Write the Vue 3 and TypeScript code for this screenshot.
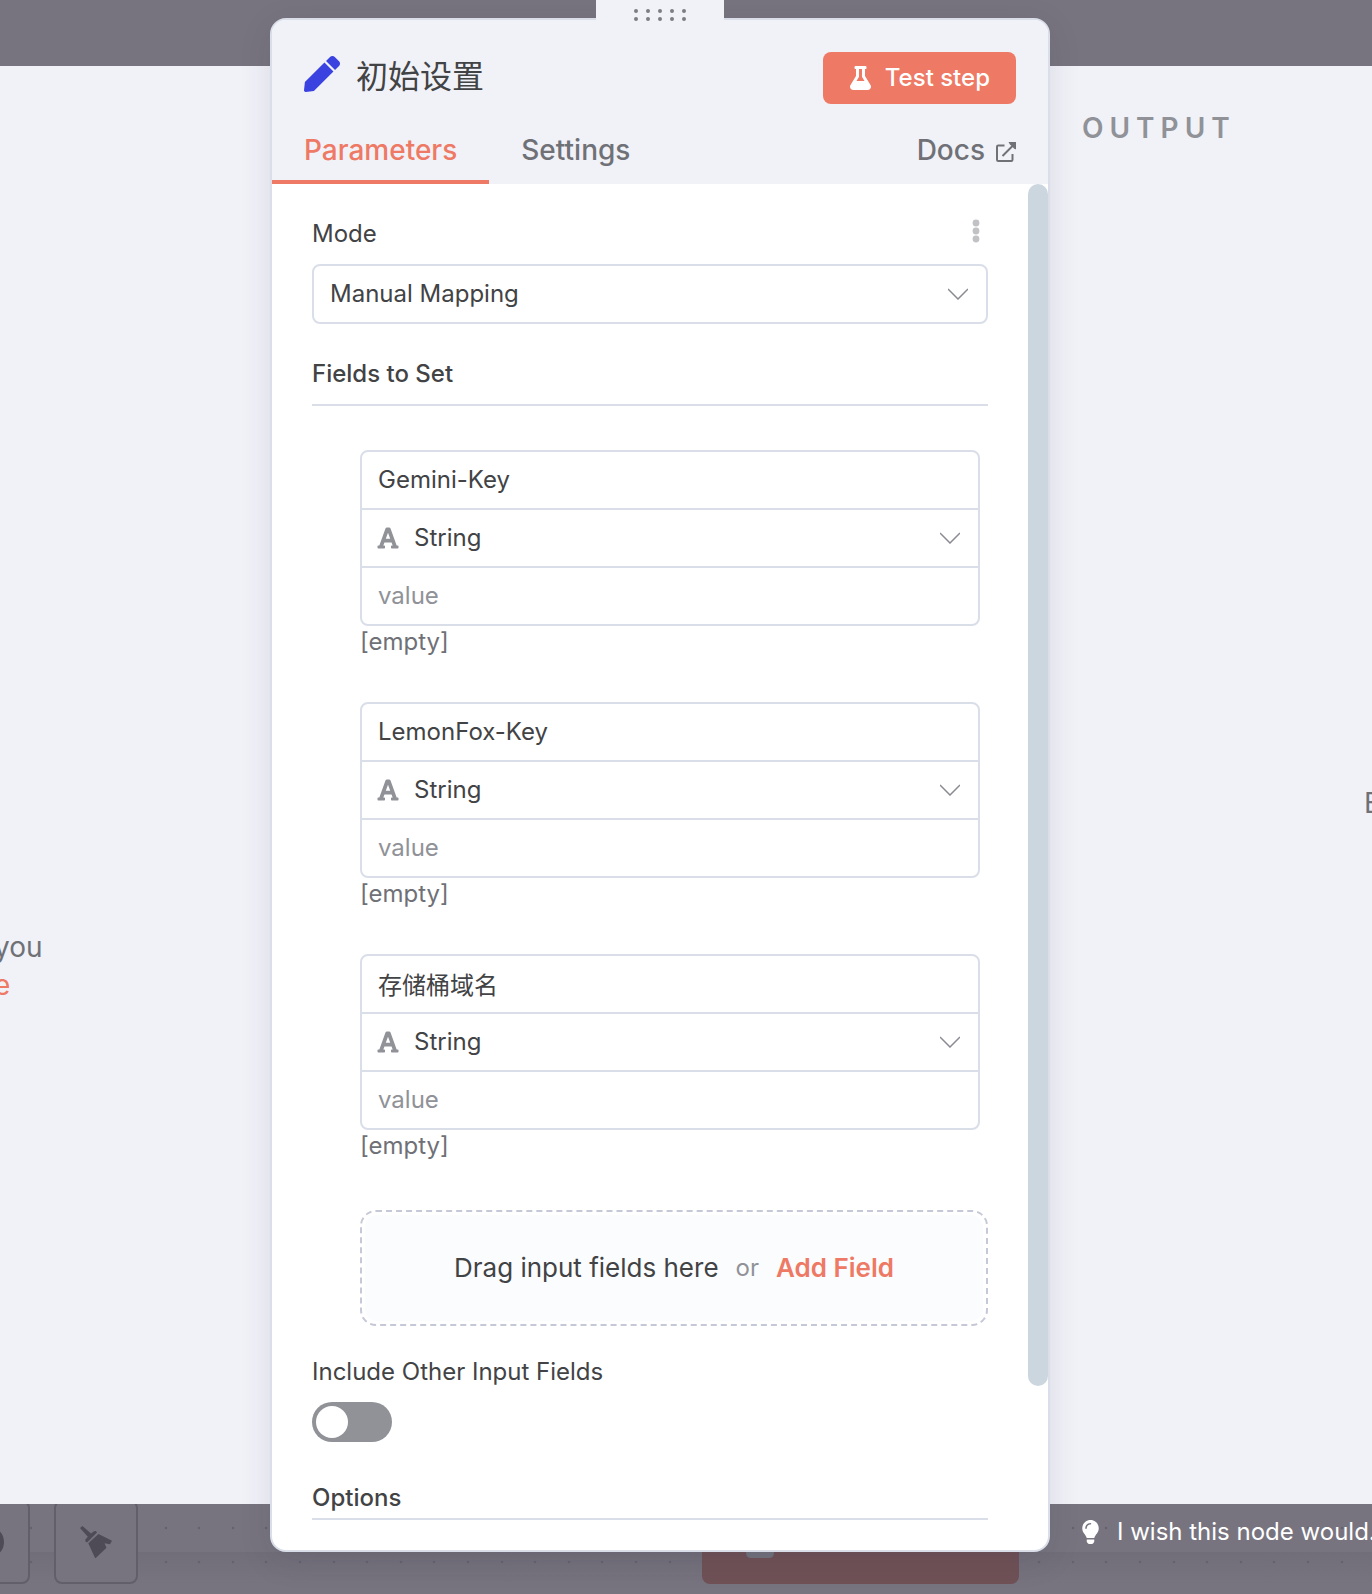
<script setup lang="ts">
import { ref } from 'vue'

interface Assignment {
  id: string
  name: string
  type: string
  value: string
}

const mode = ref('manual')
const includeOther = ref(false)
const assignments = ref<Assignment[]>([
  { id: 'gemini', name: 'Gemini-Key', type: 'string', value: '' },
  { id: 'lemonfox', name: 'LemonFox-Key', type: 'string', value: '' },
  { id: 'bucket', name: '存储桶域名', type: 'string', value: '' },
])

const dotColumns = [31, 65, 98, 132, 166]
</script>

<template>
  <div class="page">
    <div class="canvas-top"></div>

    <main class="stage">
      <section class="input-pane" aria-label="Input">
        <p class="hint">you<br /><a href="#">e</a></p>
      </section>

      <section class="panel">
        <div class="drag-handle" aria-hidden="true">
          <svg width="52" height="12" viewBox="0 0 52 12">
            <g v-for="n in 5" :key="n" fill="#7c7d83">
              <circle :cx="n * 12 - 10" cy="2" r="2" />
              <circle :cx="n * 12 - 10" cy="10" r="2" />
            </g>
          </svg>
        </div>

        <header class="panel-head">
          <div class="title-row">
            <div class="title">
              <svg class="pen" width="36" height="36" viewBox="0 0 512 512" aria-hidden="true">
                <path fill="#3a42e0" d="M290.74 93.24l128.02 128.02-277.99 277.99-114.14 12.6C11.35 513.54-1.56 500.62.14 485.34l12.7-114.22 277.9-277.88zm207.2-19.06l-60.11-60.11c-18.75-18.75-49.16-18.75-67.91 0l-56.55 56.55 128.02 128.02 56.55-56.55c18.75-18.76 18.75-49.16 0-67.91z" />
              </svg>
              <h1>初始设置</h1>
            </div>
            <button class="test-btn" type="button">
              <svg width="21" height="24" viewBox="0 0 448 512" aria-hidden="true">
                <path fill="#fff" d="M437.2 403.5L320 215V64h8c13.3 0 24-10.7 24-24V24c0-13.3-10.7-24-24-24H120c-13.3 0-24 10.7-24 24v16c0 13.3 10.7 24 24 24h8v151L10.8 403.5C-18.5 450.6 15.3 512 70.9 512h306.2c55.7 0 89.4-61.5 60.1-108.5zM137.9 320l48.2-77.6c3.7-5.2 5.8-11.6 5.8-18.4V64h64v160c0 6.9 2.2 13.2 5.8 18.4l48.2 77.6h-172z" />
              </svg>
              <span>Test step</span>
            </button>
          </div>
          <nav class="tabs">
            <a class="tab active" href="#parameters">Parameters</a>
            <a class="tab" href="#settings">Settings</a>
            <a class="tab docs" href="#docs">
              Docs
              <svg width="20" height="24" viewBox="0 0 20 24" aria-hidden="true">
                <path d="M8.500 7.500H2.200Q1 7.500 1 8.700V21.800Q1 23 2.200 23H15.300Q16.500 23 16.500 21.800V16M6.500 18L17 7.500" fill="none" stroke="#6f7177" stroke-width="2" />
                <path d="M12.500 4H20V11.500L17.800 10.200 13.800 6.200Z" fill="#6f7177" />
              </svg>
            </a>
          </nav>
        </header>

        <div class="panel-body">
          <form class="params" @submit.prevent>
            <div class="label-row">
              <label for="mode">Mode</label>
              <button class="more" type="button" aria-label="Parameter options">
                <svg width="8" height="24" viewBox="0 0 8 24">
                  <g fill="#c1c2c6">
                    <circle cx="4" cy="4" r="3.400" />
                    <circle cx="4" cy="12" r="3.400" />
                    <circle cx="4" cy="20" r="3.400" />
                  </g>
                </svg>
              </button>
            </div>
            <div class="select-box">
              <select id="mode" v-model="mode">
                <option value="manual">Manual Mapping</option>
                <option value="json">JSON</option>
              </select>
              <svg class="chevron" width="20" height="12" viewBox="0 0 20 12" aria-hidden="true">
                <path d="M0 1L10 11L20 1" fill="none" stroke="#8a8b91" stroke-width="1.500" />
              </svg>
            </div>

            <h2 class="section fields-title">Fields to Set</h2>

            <div class="assignments">
              <div v-for="item in assignments" :key="item.id" class="assignment">
                <div class="group">
                  <input v-model="item.name" class="row" type="text" aria-label="Field name" />
                  <div class="row type-row">
                    <svg class="type-icon" width="22" height="24" viewBox="0 0 448 512" aria-hidden="true">
                      <path fill="#909298" d="M432 416h-23.41L277.88 53.69A32 32 0 0 0 247.58 32h-47.16a32 32 0 0 0-30.3 21.69L39.41 416H16a16 16 0 0 0-16 16v32a16 16 0 0 0 16 16h128a16 16 0 0 0 16-16v-32a16 16 0 0 0-16-16h-19.58l23.3-64h152.56l23.3 64H304a16 16 0 0 0-16 16v32a16 16 0 0 0 16 16h128a16 16 0 0 0 16-16v-32a16 16 0 0 0-16-16zM176.85 272L224 142.51 271.15 272z" />
                    </svg>
                    <select v-model="item.type" aria-label="Field type">
                      <option value="string">String</option>
                      <option value="number">Number</option>
                      <option value="boolean">Boolean</option>
                    </select>
                    <svg class="chevron" width="20" height="12" viewBox="0 0 20 12" aria-hidden="true">
                      <path d="M0 1L10 11L20 1" fill="none" stroke="#8a8b91" stroke-width="1.500" />
                    </svg>
                  </div>
                  <input v-model="item.value" class="row" type="text" placeholder="value" aria-label="Field value" />
                </div>
                <p class="preview">[empty]</p>
              </div>
            </div>

            <div class="drop-zone">
              <div class="drop-fill">
                <span>Drag input fields here</span>
                <span class="or">or</span>
                <button class="add" type="button">Add Field</button>
              </div>
            </div>

            <label class="toggle-label" for="include">Include Other Input Fields</label>
            <input id="include" v-model="includeOther" class="toggle" type="checkbox" role="switch" />

            <h2 class="section options-title">Options</h2>
          </form>
          <div class="rail"><div class="thumb"></div></div>
        </div>
      </section>

      <section class="output-pane" aria-label="Output">
        <h2 class="output-title">OUTPUT</h2>
        <p class="execute">Execute this node to view data</p>
      </section>
    </main>

    <footer class="canvas-bottom">
      <svg class="dots" width="100%" height="90" aria-hidden="true">
        <defs>
          <pattern id="grid-dots" width="168" height="90" patternUnits="userSpaceOnUse">
            <g v-for="x in dotColumns" :key="x" fill="#65626e">
              <circle :cx="x" cy="24" r="1.300" />
              <circle :cx="x" cy="58" r="1.300" />
            </g>
          </pattern>
        </defs>
        <rect width="100%" height="90" fill="url(#grid-dots)" />
      </svg>
      <div class="tools">
        <button class="tool" type="button" aria-label="Reset zoom">
          <svg width="32" height="32" viewBox="0 0 32 32"><circle cx="16" cy="16" r="16" fill="#4e4b57" /></svg>
        </button>
        <button class="tool" type="button" aria-label="Tidy up">
          <svg width="32" height="32" viewBox="0 0 32 32">
            <g fill="#4e4b57">
              <path d="M0 2L2.500 0L11 7.500L14 5.200Q16 4.500 17 6.500L7 16.500Q5 16 5.200 13.800L7.800 10.800Z" />
              <path d="M8.300 17.300L18.500 8L32 14.800L30 18.300L24.500 17.300L26.500 21.800L15.300 32.500Z" />
            </g>
          </svg>
        </button>
      </div>
      <div class="run-cell">
        <button class="run" type="button" aria-label="Test workflow">
          <svg width="28" height="32" viewBox="0 0 28 32"><path d="M9 0H19V12L28 26Q28 32 23 32H5Q0 32 0 26L9 12Z" fill="#71727c" /></svg>
        </button>
      </div>
      <a class="wish" href="#wish">
        <svg width="17" height="24" viewBox="0 0 352 512" aria-hidden="true">
          <path fill="#fff" d="M96.06 454.35c.01 6.29 1.87 12.45 5.36 17.69l17.09 25.69a31.99 31.99 0 0 0 26.64 14.28h61.71a31.99 31.99 0 0 0 26.64-14.28l17.09-25.69a31.989 31.989 0 0 0 5.36-17.69l.04-38.35H96.01l.05 38.35zM0 176c0 44.37 16.45 84.85 43.56 115.78 16.52 18.85 42.36 58.23 52.21 91.45.04.26.07.52.11.78h160.24c.04-.26.07-.51.11-.78 9.85-33.22 35.69-72.6 52.21-91.45C335.55 260.85 352 220.37 352 176 352 78.61 272.91-.3 175.45 0 73.44.31 0 82.97 0 176zm176-80c-44.11 0-80 35.89-80 80 0 8.840-7.160 16-16 16s-16-7.160-16-16c0-61.760 50.240-112 112-112 8.840 0 16 7.160 16 16s-7.160 16-16 16z" />
        </svg>
        <span>I wish this node would...</span>
      </a>
    </footer>
  </div>
</template>

<style>
body {
  background: #77747f;
}
</style>

<style scoped>
.page {
  min-height: 100vh;
  display: flex;
  flex-direction: column;
  overflow: hidden;
  background: #77747f;
  color: #424345;
  font-family: Inter, "Noto Sans CJK SC", sans-serif;
  font-size: 24px;
  line-height: 32px;
}
* {
  box-sizing: border-box;
}
h1,
h2,
p {
  margin: 0;
}
a {
  color: inherit;
  text-decoration: none;
}
button,
input,
select {
  margin: 0;
  padding: 0;
  border: 0;
  background: transparent;
  color: inherit;
  font: inherit;
}
button {
  cursor: pointer;
}
svg {
  display: block;
  flex: none;
}

.canvas-top {
  height: 66px;
}
.stage,
.canvas-bottom {
  display: grid;
  grid-template-columns: minmax(0, 270fr) minmax(0, 780fr) minmax(0, 322fr);
}
.stage {
  position: relative;
  z-index: 1;
  flex: 1;
  background: #f1f2f8;
}

/* side panes */
.input-pane,
.output-pane {
  overflow: hidden;
}
.input-pane {
  display: flex;
  align-items: center;
  padding-top: 362px;
}
.hint {
  margin-left: -6px;
  color: #6f7177;
  font-size: 28px;
  line-height: 38px;
}
.hint a {
  color: #ee7964;
}
.output-pane {
  display: flex;
  flex-direction: column;
  padding: 44px 0 0 32px;
}
.output-title {
  color: #909298;
  font-size: 28px;
  line-height: 36px;
  font-weight: 600;
  letter-spacing: 6px;
}
.execute {
  margin: auto 0;
  padding: 0 0 44px 282px;
  color: #6f7177;
  font-size: 28px;
  line-height: 36px;
  white-space: nowrap;
}

/* node panel */
.panel {
  position: relative;
  display: flex;
  flex-direction: column;
  margin: -48px 0;
  border: 2px solid #dadee9;
  border-radius: 16px;
  background: #fff;
  box-shadow: 0 8px 32px rgba(50, 50, 70, 0.12);
}
.drag-handle {
  position: absolute;
  top: -20px;
  left: 50%;
  width: 128px;
  height: 22px;
  margin-left: -64px;
  padding: 9px 38px 0;
  background: #f1f2f8;
}
.panel-head {
  padding-top: 32px;
  border-radius: 14px 14px 0 0;
  background: #f1f2f8;
}
.title-row {
  display: flex;
  justify-content: space-between;
  padding: 0 32px;
}
.title {
  display: flex;
  gap: 16px;
}
.pen {
  margin-top: 4px;
}
.title h1 {
  font-size: 32px;
  line-height: 50px;
  font-weight: 400;
}
.test-btn {
  display: flex;
  align-items: center;
  gap: 14px;
  height: 52px;
  padding: 0 26px 0 27px;
  border-radius: 8px;
  background: #ee7964;
  color: #fff;
  font-weight: 500;
}
.tabs {
  display: flex;
  margin-top: 28px;
  color: #6f7177;
  font-size: 28px;
  line-height: 36px;
  font-weight: 500;
}
.tab {
  padding: 0 32px 12px;
  border-bottom: 4px solid transparent;
}
.tab.active {
  border-color: #ee7964;
  color: #ee7964;
}
.docs {
  display: flex;
  align-items: center;
  gap: 11px;
  margin-left: auto;
}

.panel-body {
  display: flex;
  flex: 1;
}
.params {
  flex: 1;
  min-width: 0;
  padding: 34px 40px 30px;
}
.rail {
  width: 20px;
}
.thumb {
  height: 88%;
  border-radius: 10px;
  background: #ccd6df;
}
.label-row {
  display: flex;
  justify-content: space-between;
  margin-bottom: 14px;
}
.more {
  display: flex;
  align-items: center;
  height: 26px;
  padding: 0 8px;
}
.select-box {
  position: relative;
  height: 60px;
  border: 2px solid #dadee9;
  border-radius: 8px;
}
select {
  display: block;
  width: 100%;
  height: 56px;
  padding: 0 48px 0 16px;
  appearance: none;
}
.chevron {
  position: absolute;
  top: 22px;
  right: 18px;
  pointer-events: none;
}
.section {
  border-bottom: 2px solid #dadee9;
  font-size: 24px;
  line-height: 32px;
  font-weight: 500;
}
.fields-title {
  margin-top: 34px;
  padding-bottom: 14px;
}
.assignments {
  display: flex;
  flex-direction: column;
  gap: 44px;
  padding: 44px 8px 0 48px;
}
.group {
  border: 2px solid #dadee9;
  border-radius: 8px;
}
.row {
  display: block;
  width: 100%;
  height: 56px;
  padding: 0 16px 2px;
}
.row::placeholder {
  color: #909298;
  opacity: 1;
}
.type-row {
  position: relative;
  display: flex;
  align-items: center;
  height: 60px;
  padding: 0;
  border-top: 2px solid #dadee9;
  border-bottom: 2px solid #dadee9;
}
.type-icon {
  margin-left: 15px;
}
.type-row select {
  flex: 1;
  padding-left: 15px;
}
.preview {
  color: #6f7177;
}
.drop-zone {
  margin: 48px 0 0 48px;
  padding: 3px;
  border: 2px dashed #c5c8d6;
  border-radius: 16px;
}
.drop-fill {
  display: flex;
  align-items: center;
  justify-content: center;
  gap: 17px;
  min-height: 106px;
  border-radius: 12px;
  background: #fbfcfe;
  font-size: 26px;
}
.or {
  color: #909298;
  font-size: 24px;
}
.add {
  color: #ee7964;
  font-weight: 600;
}
.toggle-label {
  display: block;
  margin: 30px 0 14px;
}
.toggle {
  display: flex;
  align-items: center;
  width: 80px;
  height: 40px;
  padding: 4px;
  border-radius: 20px;
  background: #909298;
  appearance: none;
}
.toggle::before {
  content: "";
  width: 32px;
  height: 32px;
  border-radius: 50%;
  background: #fff;
}
.toggle:checked {
  justify-content: flex-end;
  background: #ee7964;
}
.options-title {
  margin-top: 40px;
  padding-bottom: 4px;
}

/* dimmed canvas strip under the panes */
.canvas-bottom {
  position: relative;
  height: 90px;
  background: linear-gradient(#77747f 48px, #716e79 48px, #77747f 80px);
}
.dots {
  position: absolute;
  inset: 0;
}
.tools {
  position: relative;
  display: flex;
  gap: 24px;
  margin: -4px 0 0 -54px;
}
.tool {
  display: flex;
  align-items: center;
  justify-content: center;
  width: 84px;
  height: 84px;
  flex: none;
  border: 2px solid #625f6b;
  border-radius: 8px;
  background: #77747f;
}
.run-cell {
  position: relative;
  display: flex;
  justify-content: flex-end;
  padding-right: 31px;
}
.run {
  display: flex;
  align-items: center;
  width: 317px;
  height: 84px;
  margin-top: -4px;
  padding-left: 44px;
  border-radius: 8px;
  background: #6f5156;
}
.wish {
  position: relative;
  display: flex;
  align-items: center;
  gap: 18px;
  height: 55px;
  padding-left: 32px;
  overflow: hidden;
  color: #fff;
  white-space: nowrap;
}
</style>
